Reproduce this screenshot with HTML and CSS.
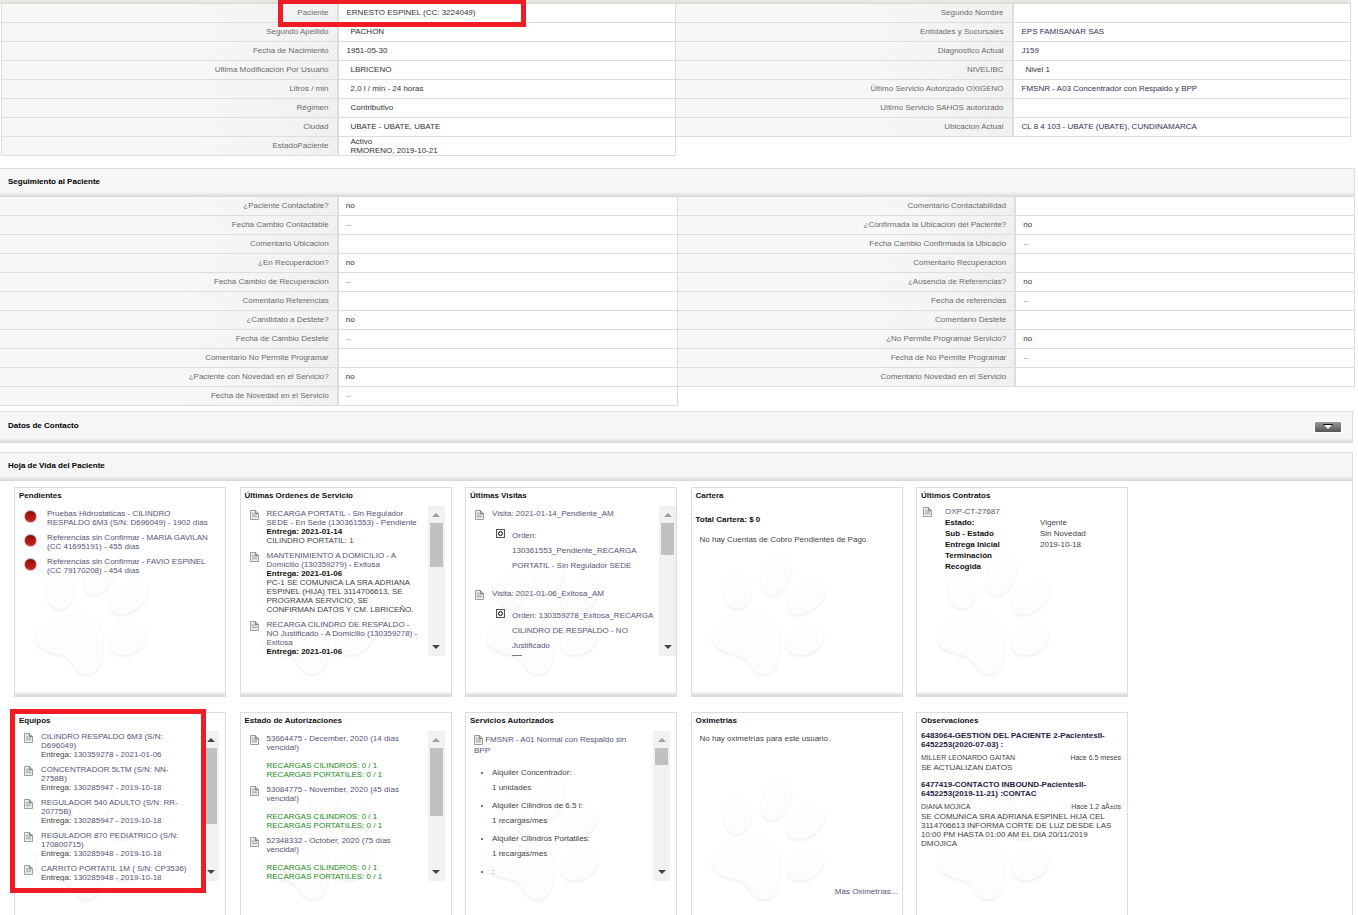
FILE: index.html
```
<!DOCTYPE html>
<html lang="es">
<head>
<meta charset="utf-8">
<title>Hoja de Vida del Paciente</title>
<link rel="stylesheet" href="styles.css">
</head>
<body>
<svg class="defs" aria-hidden="true">
  <symbol id="doc" viewBox="0 0 10 11">
    <path d="M.5.5H6L9.500 4V10.500H.5Z" fill="#f0f0f0" stroke="#929292"/>
    <path d="M6 .5V4H9.500" fill="#bbb" stroke="#777"/>
    <path d="M2 3.500H5M2 5.500H8M2 7.500H8" stroke="#999"/>
  </symbol>
  <symbol id="orden" viewBox="0 0 9 9">
    <rect x=".5" y=".5" width="8" height="8" fill="#f4f4f4" stroke="#555"/>
    <circle cx="4.500" cy="4.500" r="2" fill="none" stroke="#111"/>
  </symbol>
  <symbol id="paw" viewBox="0 0 120 125">
    <ellipse cx="26" cy="38" rx="14" ry="19"/>
    <ellipse cx="65" cy="22" rx="14" ry="22" transform="rotate(22 65 22)"/>
    <ellipse cx="95" cy="45" rx="22" ry="14" transform="rotate(-38 95 45)"/>
    <ellipse cx="94" cy="87" rx="20" ry="15" transform="rotate(-28 94 87)"/>
    <path d="M1 86C2 72 22 61 44 61C62 61 69 71 69 87C69 104 67 121 54 122C40 123 40 109 30 104C20 101 1 98 1 86Z"/>
  </symbol>
</svg>

<main>
<div class="strip"></div>
<table class="data data-patient">
  <tr><th scope="row">Paciente</th><td>ERNESTO ESPINEL (CC: 3224049)</td><th scope="row">Segundo Nombre</th><td></td></tr>
  <tr><th scope="row">Segundo Apellido</th><td class="inset">PACHON</td><th scope="row">Entidades y Sucursales</th><td><a href="#">EPS FAMISANAR SAS</a></td></tr>
  <tr><th scope="row">Fecha de Nacimiento</th><td>1951-05-30</td><th scope="row">Diagnostico Actual</th><td><a href="#">J159</a></td></tr>
  <tr><th scope="row">Ultima Modificación Por Usuario</th><td class="inset">LBRICENO</td><th scope="row">NIVELIBC</th><td class="inset">Nivel 1</td></tr>
  <tr><th scope="row">Litros / min</th><td class="inset">2,0 l / min - 24 horas</td><th scope="row">Último Servicio Autorizado OXIGENO</th><td><a href="#">FMSNR - A03 Concentrador con Respaldo y BPP</a></td></tr>
  <tr><th scope="row">Régimen</th><td class="inset">Contributivo</td><th scope="row">Ultimo Servicio SAHOS autorizado</th><td></td></tr>
  <tr><th scope="row">Ciudad</th><td class="inset">UBATE - UBATE, UBATE</td><th scope="row">Ubicacion Actual</th><td><a href="#">CL 8 4 103 - UBATE (UBATE), CUNDINAMARCA</a></td></tr>
  <tr><th scope="row">EstadoPaciente</th><td class="inset two-line">Activo<br>RMORENO, 2019-10-21</td></tr>
</table>

<h2 class="bar bar-follow">Seguimiento al Paciente</h2>
<table class="data data-follow">
  <tr><th scope="row">¿Paciente Contactable?</th><td>no</td><th scope="row">Comentario Contactabilidad</th><td></td></tr>
  <tr><th scope="row">Fecha Cambio Contactable</th><td class="blank">--</td><th scope="row">¿Confirmada la Ubicacion del Paciente?</th><td>no</td></tr>
  <tr><th scope="row">Comentario Ubicacion</th><td></td><th scope="row">Fecha Cambio Confirmada la Ubicacio</th><td class="blank">--</td></tr>
  <tr><th scope="row">¿En Recuperacion?</th><td>no</td><th scope="row">Comentario Recuperacion</th><td></td></tr>
  <tr><th scope="row">Fecha Cambio de Recuperacion</th><td class="blank">--</td><th scope="row">¿Ausencia de Referencias?</th><td>no</td></tr>
  <tr><th scope="row">Comentario Referencias</th><td></td><th scope="row">Fecha de referencias</th><td class="blank">--</td></tr>
  <tr><th scope="row">¿Candidato a Destete?</th><td>no</td><th scope="row">Comentario Destete</th><td></td></tr>
  <tr><th scope="row">Fecha de Cambio Destete</th><td class="blank">--</td><th scope="row">¿No Permite Programar Servicio?</th><td>no</td></tr>
  <tr><th scope="row">Comentario No Permite Programar</th><td></td><th scope="row">Fecha de No Permite Programar</th><td class="blank">--</td></tr>
  <tr><th scope="row">¿Paciente con Novedad en el Servicio?</th><td>no</td><th scope="row">Comentario Novedad en el Servicio</th><td></td></tr>
  <tr><th scope="row">Fecha de Novedad en el Servicio</th><td class="blank">--</td></tr>
</table>

<div class="bar bar-contact">
  <h2>Datos de Contacto</h2>
  <button class="toggle" type="button" aria-label="Desplegar"><svg viewBox="0 0 26 10"><path d="M8 2.500H18" stroke="#111"/><path d="M9 3H17L13 7Z" fill="#fff"/></svg></button>
</div>

<h2 class="bar bar-life">Hoja de Vida del Paciente</h2>
<div class="board">
  <section class="card">
    <svg class="paw"><use href="#paw"/></svg>
    <h3>Pendientes</h3>
    <ul class="list list-dots">
      <li><span class="dot"></span><a href="#">Pruebas Hidrostaticas - CILINDRO<br>RESPALDO 6M3 (S/N: D696049) - 1902 días</a></li>
      <li><span class="dot"></span><a href="#">Referencias sin Confirmar - MARIA GAVILAN<br>(CC 41695191) - 455 días</a></li>
      <li><span class="dot"></span><a href="#">Referencias sin Confirmar - FAVIO ESPINEL<br>(CC 79170208) - 454 días</a></li>
    </ul>
  </section>

  <section class="card">
    <svg class="paw"><use href="#paw"/></svg>
    <h3>Últimas Ordenes de Servicio</h3>
    <div class="scroll">
      <ul class="list">
        <li><svg class="ico"><use href="#doc"/></svg><div><a href="#">RECARGA PORTATIL - Sin Regulador<br>SEDE - En Sede (130361553) - Pendiente</a><br><b>Entrega: 2021-01-14</b><br>CILINDRO PORTATIL: 1</div></li>
        <li><svg class="ico"><use href="#doc"/></svg><div><a href="#">MANTENIMIENTO A DOMICILIO - A<br>Domicilio (130359279) - Exitosa</a><br><b>Entrega: 2021-01-06</b><br>PC-1 SE COMUNICA LA SRA ADRIANA<br>ESPINEL (HIJA) TEL 3114706613, SE<br>PROGRAMA SERVICIO, SE<br>CONFIRMAN DATOS Y CM. LBRICEÑO.</div></li>
        <li><svg class="ico"><use href="#doc"/></svg><div><a href="#">RECARGA CILINDRO DE RESPALDO -<br>NO Justificado - A Domicilio (130359278) -<br>Exitosa</a><br><b>Entrega: 2021-01-06</b></div></li>
      </ul>
      <div class="track"><i class="up"></i><i class="thumb thumb-orders"></i><i class="down"></i></div>
    </div>
  </section>

  <section class="card">
    <svg class="paw"><use href="#paw"/></svg>
    <h3>Últimas Visitas</h3>
    <div class="scroll scroll-flush">
      <ul class="list visits">
        <li><svg class="ico"><use href="#doc"/></svg><div><a href="#">Visita: 2021-01-14_Pendiente_AM</a>
          <p><svg class="ico-order"><use href="#orden"/></svg><a href="#">Orden:<br>130361553_Pendiente_RECARGA<br>PORTATIL - Sin Regulador SEDE</a></p></div></li>
        <li><svg class="ico"><use href="#doc"/></svg><div><a href="#">Visita: 2021-01-06_Exitosa_AM</a>
          <p><svg class="ico-order"><use href="#orden"/></svg><a href="#">Orden: 130359278_Exitosa_RECARGA<br>CILINDRO DE RESPALDO - NO<br>Justificado</a></p><hr></div></li>
      </ul>
      <div class="track"><i class="up"></i><i class="thumb thumb-visits"></i><i class="down"></i></div>
    </div>
  </section>

  <section class="card">
    <svg class="paw"><use href="#paw"/></svg>
    <h3>Cartera</h3>
    <p class="total">Total Cartera: $ 0</p>
    <p class="note">No hay Cuentas de Cobro Pendientes de Pago.</p>
  </section>

  <section class="card">
    <svg class="paw"><use href="#paw"/></svg>
    <h3>Últimos Contratos</h3>
    <div class="contract">
      <svg class="ico"><use href="#doc"/></svg>
      <div>
        <a href="#">OXP-CT-27687</a>
        <table class="terms">
          <tr><th scope="row">Estado:</th><td>Vigente</td></tr>
          <tr><th scope="row">Sub - Estado</th><td>Sin Novedad</td></tr>
          <tr><th scope="row">Entrega Inicial</th><td>2019-10-18</td></tr>
          <tr><th scope="row">Terminación</th><td></td></tr>
          <tr><th scope="row">Recogida</th><td></td></tr>
        </table>
      </div>
    </div>
  </section>

  <section class="card">
    <svg class="paw"><use href="#paw"/></svg>
    <h3>Equipos</h3>
    <div class="scroll">
      <ul class="list list-gear">
        <li><svg class="ico"><use href="#doc"/></svg><div><a href="#">CILINDRO RESPALDO 6M3 (S/N:<br>D696049)</a><br>Entrega: <a href="#">130359278 - 2021-01-06</a></div></li>
        <li><svg class="ico"><use href="#doc"/></svg><div><a href="#">CONCENTRADOR 5LTM (S/N: NN-<br>2758B)</a><br>Entrega: <a href="#">130285947 - 2019-10-18</a></div></li>
        <li><svg class="ico"><use href="#doc"/></svg><div><a href="#">REGULADOR 540 ADULTO (S/N: RR-<br>20775B)</a><br>Entrega: <a href="#">130285947 - 2019-10-18</a></div></li>
        <li><svg class="ico"><use href="#doc"/></svg><div><a href="#">REGULADOR 870 PEDIATRICO (S/N:<br>170800715)</a><br>Entrega: <a href="#">130285948 - 2019-10-18</a></div></li>
        <li><svg class="ico"><use href="#doc"/></svg><div><a href="#">CARRITO PORTATIL 1M ( S/N: CP3536)</a><br>Entrega: <a href="#">130285948 - 2019-10-18</a></div></li>
      </ul>
      <div class="track"><i class="up up-active"></i><i class="thumb thumb-gear"></i><i class="down"></i></div>
    </div>
    <div class="mark mark-gear"></div>
  </section>

  <section class="card">
    <svg class="paw"><use href="#paw"/></svg>
    <h3>Estado de Autorizaciones</h3>
    <div class="scroll">
      <ul class="list">
        <li><svg class="ico"><use href="#doc"/></svg><div><a href="#">53664475 - December, 2020 (14 días<br>vencida!)</a><p class="quota">RECARGAS CILINDROS: 0 / 1<br>RECARGAS PORTATILES: 0 / 1</p></div></li>
        <li><svg class="ico"><use href="#doc"/></svg><div><a href="#">53084775 - November, 2020 (45 días<br>vencida!)</a><p class="quota">RECARGAS CILINDROS: 0 / 1<br>RECARGAS PORTATILES: 0 / 1</p></div></li>
        <li><svg class="ico"><use href="#doc"/></svg><div><a href="#">52348332 - October, 2020 (75 días<br>vencida!)</a><p class="quota">RECARGAS CILINDROS: 0 / 1<br>RECARGAS PORTATILES: 0 / 1</p></div></li>
      </ul>
      <div class="track"><i class="up"></i><i class="thumb thumb-auth"></i><i class="down"></i></div>
    </div>
  </section>

  <section class="card">
    <svg class="paw"><use href="#paw"/></svg>
    <h3>Servicios Autorizados</h3>
    <div class="scroll">
      <div class="services">
        <a href="#"><svg class="ico ico-inline"><use href="#doc"/></svg> FMSNR - A01 Normal con Respaldo sin<br>BPP</a>
        <ul>
          <li>Alquiler Concentrador:<br>1 unidades</li>
          <li>Alquiler Cilindros de 6.5 l:<br>1 recargas/mes</li>
          <li>Alquiler Cilindros Portatiles:<br>1 recargas/mes</li>
          <li>:</li>
        </ul>
      </div>
      <div class="track"><i class="up"></i><i class="thumb thumb-services"></i><i class="down"></i></div>
    </div>
  </section>

  <section class="card">
    <svg class="paw"><use href="#paw"/></svg>
    <h3>Oximetrias</h3>
    <div class="oxi">
      <p>No hay oximetrías para este usuario.</p>
      <a href="#">Más Oximetrías...</a>
    </div>
  </section>

  <section class="card">
    <svg class="paw"><use href="#paw"/></svg>
    <h3>Observaciones</h3>
    <article class="obs">
      <h4>6483064-GESTION DEL PACIENTE 2-PacientesII-<br>6452253(2020-07-03) :</h4>
      <div class="byline"><span>MILLER LEONARDO GAITAN</span><span>Hace 6.5 meses</span></div>
      <p>SE ACTUALIZAN DATOS</p>
    </article>
    <article class="obs">
      <h4>6477419-CONTACTO INBOUND-PacientesII-<br>6452253(2019-11-21) :CONTAC</h4>
      <div class="byline"><span>DIANA MOJICA</span><span>Hace 1.2 aÃ±os</span></div>
      <p>SE COMUNICA SRA ADRIANA ESPINEL HIJA CEL<br>3114706613 INFORMA CORTE DE LUZ DESDE LAS<br>10:00 PM HASTA 01:00 AM EL DIA 20/11/2019<br>DMOJICA</p>
    </article>
  </section>
</div>
</main>
<div class="mark mark-patient"></div>
</body>
</html>
```
FILE: styles.css
```
* { box-sizing: border-box; }

body {
  margin: 0;
  height: 100vh;
  overflow: hidden;
  background: #fff;
  color: #444;
  font-family: "Liberation Sans", Arial, sans-serif;
  font-size: 8px;
  line-height: 9px;
}

main { height: 100vh; overflow: hidden; }

h2, h3, h4, p, ul { margin: 0; padding: 0; font-size: 8px; }
ul { list-style: none; }
svg { display: block; }
a { color: #555577; text-decoration: none; }
b { color: #111; }

.defs { position: absolute; width: 0; height: 0; }

.strip {
  height: 4px;
  margin-right: 7px;
  background: linear-gradient(#eeeee8, #d8d8d4);
}

/* Label / value tables */
.data {
  width: 100%;
  table-layout: fixed;
  border-collapse: separate;
  border-spacing: 0;
}
.data-patient { width: calc(100% - 8px); margin-left: 1px; }
.data-follow { width: calc(100% - 3px); }
.data th, .data td { height: 19px; padding: 0 8px 2px; border-bottom: 1px solid #ddd; }
.data th {
  border-right: 2px solid #ddd;
  background:
    linear-gradient(90deg, #f7f7f7 55%, rgba(247, 247, 247, 0)),
    repeating-linear-gradient(135deg, #ececec 0 1px, #f3f3f3 1px 3px);
  color: #6c6c6c;
  font-weight: normal;
  text-align: right;
}
.data td {
  border-right: 1px solid #ddd;
  color: #333;
  text-align: left;
}
.data-follow td { padding-left: 7px; }
.data td.inset { padding-left: 12px; }
.data td.two-line { padding-bottom: 0; }
.data td.blank { color: #888; }
.data td a { color: #333355; }
.data-patient th:first-child { border-left: 1px solid #ddd; }

/* Section bars */
.bar {
  display: flex;
  align-items: center;
  height: 29px;
  padding: 0 10px 3px 8px;
  border: 1px solid #ddd;
  border-left: 0;
  border-bottom: 0;
  background: linear-gradient(#f6f6f6, #d6d6d0) bottom / 100% 5px no-repeat #f6f6f6;
  color: #000;
}
.bar-follow { margin: 12px 3px 0 0; }
.bar-contact { justify-content: space-between; height: 32px; margin: 5px 5px 0 0; padding-bottom: 5px; }
.bar-life { margin: 9px 5px 0 0; }

.toggle {
  width: 28px;
  height: 12px;
  margin-top: 4px;
  padding: 0;
  border: 1px solid #fff;
  border-radius: 2px;
  background: linear-gradient(#999, #555);
}

/* Card board */
.board {
  display: grid;
  grid-template-columns: repeat(5, 212px);
  justify-content: space-between;
  row-gap: 15px;
  margin-right: 5px;
  padding: 6px 224px 0 14px;
  border-right: 1px solid #ddd;
}
.card {
  position: relative;
  height: 210px;
  padding-top: 3px;
  border: 1px solid #ddd;
  background: linear-gradient(#fff, #d8d8d3) bottom / 100% 5px no-repeat;
}
.card > * { position: relative; }
.card h3 { padding-left: 4px; color: #111; }
.card .paw {
  position: absolute;
  left: 19px;
  top: 64px;
  width: 120px;
  height: 125px;
  overflow: visible;
  fill: #fdfdfb;
  filter: drop-shadow(0 2px 1px #f1f1f1);
}

.scroll {
  display: flex;
  justify-content: space-between;
  height: 150px;
  margin: 6px 6px 0 0;
  overflow: hidden;
}
.scroll-flush { margin-right: 0; }

.list { padding: 3px 0 0 9px; }
.list li { display: flex; gap: 8px; margin-bottom: 6px; white-space: nowrap; }
.list-dots { margin-top: 6px; }
.list-dots li { gap: 10px; }
.list-gear { padding-top: 1px; }

.ico { flex: none; width: 9px; height: 10px; margin-top: 1px; }
.ico-inline { display: inline-block; margin: 0; vertical-align: middle; }
.dot {
  flex: none;
  width: 13px;
  height: 13px;
  margin-top: 1px;
  border: 1px solid #bbb;
  border-radius: 50%;
  background: linear-gradient(#8a1414, #d81c1c);
}

.track {
  display: flex;
  flex: none;
  flex-direction: column;
  align-items: center;
  width: 17px;
  padding: 7px 0 7px;
  background: #f1f1f1;
}
.up, .down { border: 4px solid transparent; border-top: 0; border-bottom: 4px solid #a0a0a0; }
.up-active { border-bottom-color: #444; }
.down { border-top: 4px solid #444; border-bottom: 0; margin-top: auto; }
.thumb { width: 13px; margin-top: 6px; background: #c1c1c1; }
.thumb-orders { height: 44px; }
.thumb-visits { height: 32px; }
.thumb-gear { height: 76px; }
.thumb-auth { height: 68px; }
.thumb-services { height: 17px; }

.visits li { margin-bottom: 16px; }
.visits p { display: flex; gap: 7px; margin: 10px 0 0 4px; line-height: 15px; }
.ico-order { flex: none; width: 9px; height: 9px; margin-top: 1px; }
.visits hr { width: 10px; height: 1px; margin: 2px 0 0 20px; border: 0; background: #777; }

.total { margin: 15px 0 0 4px; color: #111; font-weight: bold; }
.note { margin: 11px 0 0 8px; }

.contract { display: flex; gap: 13px; margin: 6px 0 0 6px; line-height: 11px; }
.terms { border-spacing: 0; font-size: 8px; line-height: 11px; }
.terms th { width: 95px; height: 11px; padding: 0; color: #111; text-align: left; }
.terms td { padding: 0; }

.quota { margin-top: 9px; color: #228b22; }

.services { padding: 3px 0 0 8px; line-height: 11px; }
.services ul { margin-top: 9px; padding-left: 18px; list-style: disc; line-height: 15px; }
.services li { margin-bottom: 3px; }

.oxi {
  display: flex;
  flex-direction: column;
  justify-content: space-between;
  height: 162px;
  margin: 9px 4px 0 8px;
}
.oxi a { align-self: flex-end; }

.obs { margin: 6px 6px 0 4px; }
.obs + .obs { margin-top: 8px; }
.obs h4 { color: #222244; white-space: nowrap; }
.obs p { white-space: nowrap; }
.byline { display: flex; justify-content: space-between; margin: 4px 0 1px; font-size: 7px; }

/* Red highlight frames laid over the page */
.mark { position: absolute; border: 5px solid #ee1c25; pointer-events: none; }
.mark-patient { left: 278px; top: -1px; width: 248px; height: 28px; }
.card > .mark-gear { position: absolute; left: -5px; top: -4px; width: 196px; height: 184px; }
```
